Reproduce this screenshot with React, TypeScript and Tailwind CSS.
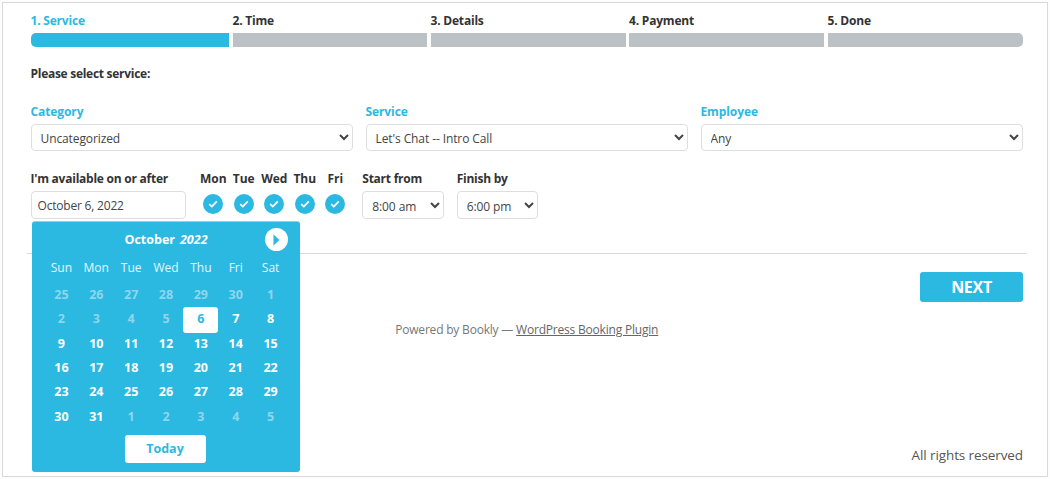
import React from "react";

const font = { fontFamily: '"Open Sans", "Noto Sans", sans-serif' };

const steps = [
  { label: "1. Service", w: "w-[198.5px]", bar: "bg-[#2bb9e2] rounded-l-[5px]", text: "text-[#2bb9e2]" },
  { label: "2. Time", w: "w-[194.5px]", bar: "bg-[#bcc1c5]", text: "text-[#333]" },
  { label: "3. Details", w: "w-[195px]", bar: "bg-[#bcc1c5]", text: "text-[#333]" },
  { label: "4. Payment", w: "w-[195px]", bar: "bg-[#bcc1c5]", text: "text-[#333]" },
  { label: "5. Done", w: "w-[195px]", bar: "bg-[#bcc1c5] rounded-r-[5px]", text: "text-[#333]" },
];

const cols = ["Sun", "Mon", "Tue", "Wed", "Thu", "Fri", "Sat"];
const rows: [string, boolean][][] = [
  [["25", true], ["26", true], ["27", true], ["28", true], ["29", true], ["30", true], ["1", true]],
  [["2", true], ["3", true], ["4", true], ["5", true], ["6", false], ["7", false], ["8", false]],
  [["9", false], ["10", false], ["11", false], ["12", false], ["13", false], ["14", false], ["15", false]],
  [["16", false], ["17", false], ["18", false], ["19", false], ["20", false], ["21", false], ["22", false]],
  [["23", false], ["24", false], ["25", false], ["26", false], ["27", false], ["28", false], ["29", false]],
  [["30", false], ["31", false], ["1", true], ["2", true], ["3", true], ["4", true], ["5", true]],
];

function Check() {
  return (
    <span className="flex h-[20px] w-[20px] items-center justify-center rounded-full bg-[#2bb9e2]">
      <svg width="10" height="8" viewBox="0 0 10 8" fill="none">
        <path d="M1.2 4.2 L3.8 6.6 L8.8 1.4" stroke="#fff" strokeWidth="1.7" />
      </svg>
    </span>
  );
}

function Field({ label, value, className }: { label: string; value: string; className: string }) {
  return (
    <div className={className}>
      <div className="h-[20px] text-[12px] leading-[20px] font-bold tracking-[-0.1px] text-[#2bb9e2]">{label}</div>
      <select
        defaultValue={value}
        className="mt-[2px] h-[27px] w-full rounded-[4px] border border-[#dedede] bg-white pt-[2px] pl-[5px] text-[12px] tracking-[-0.1px] text-[#444]"
      >
        <option>{value}</option>
      </select>
    </div>
  );
}

function SmallSelect({ label, value, className }: { label: string; value: string; className: string }) {
  return (
    <div className={className}>
      <div className="h-[20px] text-[12px] leading-[20px] font-bold tracking-[-0.25px] whitespace-nowrap text-[#333]">{label}</div>
      <select
        defaultValue={value}
        className="mt-[2px] h-[28px] w-full rounded-[4px] border border-[#dedede] bg-white pt-[2px] pl-[5px] text-[12px] tracking-[-0.1px] text-[#444]"
      >
        <option>{value}</option>
      </select>
    </div>
  );
}

function Calendar() {
  return (
    <div className="absolute top-[218px] left-[29px] h-[251px] w-[268px] rounded-[3px] border-t border-[#b9c3cc] bg-[#2bb9e2] px-[12px] text-white">
      <div className="relative flex h-[36px] items-center justify-center text-[12.5px] font-bold">
        <span className="mr-[5px]">October</span>
        <em>2022</em>
        <span className="absolute top-[6px] right-0 flex h-[23px] w-[23px] items-center justify-center rounded-full bg-white">
          <svg width="7" height="12" viewBox="0 0 7 12"><path d="M0.5 0.5 L6.5 6 L0.5 11.5 Z" fill="#2bb9e2" /></svg>
        </span>
      </div>
      <div className="grid grid-cols-7">
        {cols.map((c) => (
          <div key={c} className="flex h-[20px] items-center justify-center text-[12px] text-[#e4f6fb]">{c}</div>
        ))}
      </div>
      <div className="mt-[5px] grid grid-cols-7 grid-rows-6">
        {rows.flat().map(([d, off], i) => (
          <div key={i} className="flex h-[24.4px] items-center justify-center">
            {d === "6" && !off ? (
              <span className="flex h-[26px] w-[35px] items-center justify-center rounded-[3px] bg-white text-[12.5px] font-bold text-[#2bb9e2]">6</span>
            ) : (
              <span className={"text-[12.5px] font-bold " + (off ? "text-[#8fd6ec]" : "text-white")}>{d}</span>
            )}
          </div>
        ))}
      </div>
      <div className="mt-[6px] flex justify-center pr-[2px]">
        <span className="flex h-[28px] w-[81px] items-center justify-center rounded-[3px] bg-white text-[12.5px] font-bold text-[#2bb9e2]">Today</span>
      </div>
    </div>
  );
}

export default function App() {
  return (
    <div className="h-[479px] w-[1050px] bg-[#fdfdfd] p-[2px]" style={font}>
      <div className="relative flex h-[475px] w-[1046px] flex-col border border-[#d9d9d9] bg-white pr-[24px] pl-[27.5px]">
        <div className="flex gap-[3.5px] pt-[8px]">
          {steps.map((s) => (
            <div key={s.label} className={s.w + " shrink-0"}>
              <div className={"h-[20px] text-[12px] leading-[20px] font-bold tracking-[-0.2px] " + s.text}>{s.label}</div>
              <div className={"mt-[2px] h-[14px] " + s.bar} />
            </div>
          ))}
        </div>
        <div className="mt-[17px] h-[20px] text-[12px] leading-[20px] font-bold tracking-[-0.28px] text-[#333]">Please select service:</div>
        <div className="mt-[18px] flex gap-[12.5px]">
          <Field label="Category" value="Uncategorized" className="w-[322.5px]" />
          <Field label="Service" value="Let's Chat -- Intro Call" className="w-[322.5px]" />
          <Field label="Employee" value="Any" className="w-[322.5px]" />
        </div>
        <div className="mt-[18px] flex">
          <div className="w-[155px]">
            <div className="h-[20px] text-[12px] leading-[20px] font-bold tracking-[-0.24px] whitespace-nowrap text-[#333]">I'm available on or after</div>
            <div className="mt-[2px] flex h-[28px] items-center rounded-[4px] border border-[#dedede] pt-[2px] pl-[6px] text-[12px] tracking-[-0.2px] text-[#444]">October 6, 2022</div>
          </div>
          <div className="ml-[12.5px] flex w-[152.5px]">
            {["Mon", "Tue", "Wed", "Thu", "Fri"].map((d) => (
              <div key={d} className="flex w-[30.5px] flex-col items-center">
                <div className="h-[20px] text-[12px] leading-[20px] font-bold tracking-[-0.05px] text-[#333]">{d}</div>
                <div className="mt-[5px]"><Check /></div>
              </div>
            ))}
          </div>
          <SmallSelect label="Start from" value="8:00 am" className="ml-[11.8px] w-[82px]" />
          <SmallSelect label="Finish by" value="6:00 pm" className="ml-[12.4px] w-[81.6px]" />
        </div>
        <div className="mt-[34px] -mr-[4px] -ml-[3.5px] h-px bg-[#d9d9d9]" />
        <div className="mt-[18px] flex justify-end">
          <button className="h-[30px] w-[103px] rounded-[3px] bg-[#2bb9e2] text-[16px] font-bold tracking-[-0.3px] text-white">NEXT</button>
        </div>
        <div className="mt-[18px] text-center text-[12px] leading-[20px] tracking-[-0.2px] text-[#777]">
          Powered by Bookly — <span className="text-[#666] underline">WordPress Booking Plugin</span>
        </div>
        <div className="mt-auto mb-[11px] text-right text-[13.5px] leading-[20px] tracking-[-0.1px] text-[#555]">All rights reserved</div>
        <Calendar />
      </div>
    </div>
  );
}
